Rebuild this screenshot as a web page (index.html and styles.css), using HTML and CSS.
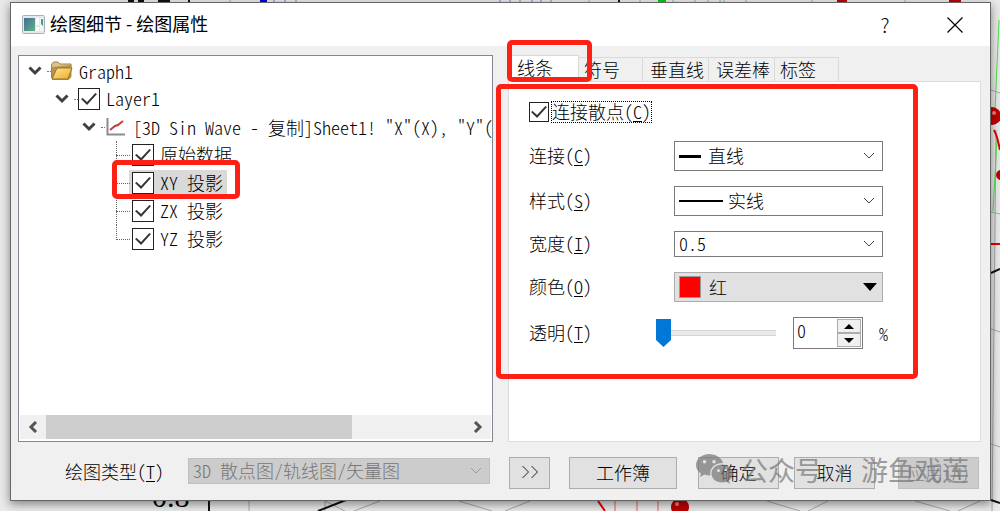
FILE: index.html
```html
<!DOCTYPE html>
<html lang="zh-CN">
<head>
<meta charset="utf-8">
<meta name="viewport" content="width=device-width, initial-scale=1">
<title>绘图细节 - 绘图属性</title>
<link rel="stylesheet" href="styles.css">
</head>
<body>
<svg class="graph" viewBox="0 0 1000 511" preserveAspectRatio="none" aria-hidden="true">
  <g stroke="#a8a8a8" fill="none">
    <path d="M249 500V511M325 500V511M325 501L345 511M354 511L380 501M459 501L492 511M505 511L530 501M767 501L800 511M808 511L828 501M915 501L950 511M958 511L980 501M991 90L1000 93M996 130L992 511M991 212L1000 214M991 329L1000 332M991 444L1000 447"/>
    <path d="M230 0V3M589 0V3M640 0V3M724 0V3M812 0V3M905 0V3"/>
  </g>
  <path d="M209 500V511M318 511L346 500M991 273L1000 269M991 500L1000 503M619 0V3" stroke="#111" stroke-width="2"/>
  <path d="M128 1H134M138 1H144M158 1H170M188 1H190" stroke="#111" stroke-width="3"/>
  <path d="M260 1H267" stroke="#0000e0" stroke-width="3"/>
  <path d="M274 0V3M285 0V3M296 0V3M500 0V3M510 0V3M520 0V3M532 0V3M541 0V3M551 0V3" stroke="#7777e8"/>
  <path d="M658 1H666" stroke="#00d000" stroke-width="3"/>
  <path d="M673 0V3M695 0V3M708 0V3M720 0V3M746 0V3M999 20L995 110M997 140L993 211" stroke="#4ce04c"/>
  <path d="M837 1H847M949 1H961" stroke="#c00000" stroke-width="3"/>
  <path d="M994 130Q997 135 1000 150M598 501L605 511M991 244H1000" stroke="#e00000" stroke-width="2" fill="none"/>
  <path d="M615 501V511M637 501V511M658 501V511" stroke="#e06060"/>
  <g fill="#c00000"><circle cx="992" cy="116" r="9"/><circle cx="1001" cy="175" r="5"/><circle cx="680" cy="507" r="9"/></g>
  <g fill="#f08080"><circle cx="994" cy="113" r="2"/><circle cx="677" cy="504" r="2"/></g>
  <text class="axis" x="152" y="507">0.8</text>
</svg>

<main class="dialog">
  <header class="titlebar">
    <svg class="app-icon" viewBox="0 0 23 19" aria-hidden="true">
      <defs><linearGradient id="app" x1="0" y1="0" x2="1" y2="1"><stop offset="0" stop-color="#3f6f92"/><stop offset="1" stop-color="#62b08a"/></linearGradient></defs>
      <rect x=".5" y=".5" width="22" height="18" rx="1" fill="#e4e9ee" stroke="#a9b0b8"/>
      <rect x="2" y="3" width="11" height="13" fill="url(#app)"/>
      <path d="M14 3h3v7h-3zM14 12h3v4h-3z" fill="#fafafa"/>
      <path d="M18 3h3v13h-3z" fill="#f5f5f5"/><path d="M19 4h2v7l-2-2z" fill="#4e9a86"/>
    </svg>
    <h1 class="title">绘图细节 - 绘图属性</h1>
    <button class="caption" type="button" aria-label="帮助">?</button>
    <button class="caption" type="button" aria-label="关闭">
      <svg width="16" height="16" viewBox="0 0 16 16" aria-hidden="true"><path d="M.5 .5l15 15M15.500 .5l-15 15" stroke="#000" stroke-width="1.200"/></svg>
    </button>
  </header>

  <div class="content">
    <section class="tree-pane">
      <ul class="tree">
        <li class="node level1">
          <svg class="chevron" viewBox="0 0 14 10"><path d="M1.500 1.500L7 7l5.500-5.500" /></svg>
          <svg class="node-icon" viewBox="0 0 22 20" aria-hidden="true">
            <defs><linearGradient id="fold" x1="0" y1="0" x2="1" y2="1"><stop offset="0" stop-color="#ffe9a0"/><stop offset="1" stop-color="#f0a818"/></linearGradient></defs>
            <path d="M.5 17V3L3 1h4l2 2h11v4" fill="#d8c38a" stroke="#9b8654"/>
            <path d="M20.500 4v12l-3 3H1V6z" fill="#b99545"/>
            <path d="M6 7h15l-4 11H1z" fill="url(#fold)" stroke="#8d7434"/>
          </svg>
          <span class="mono">Graph1</span>
        </li>
        <li class="node level2">
          <svg class="chevron" viewBox="0 0 14 10"><path d="M1.500 1.500L7 7l5.500-5.500"/></svg>
          <label class="check"><input class="box" type="checkbox" checked><span class="mono">Layer1</span></label>
        </li>
        <li class="node level3">
          <svg class="chevron" viewBox="0 0 14 10"><path d="M1.500 1.500L7 7l5.500-5.500"/></svg>
          <svg class="node-icon" viewBox="0 0 22 20" aria-hidden="true"><path d="M2.500 1v16.500H20" fill="none" stroke="#8c8c8c" stroke-width="2"/><path d="M5 13l5-4 3-1 5-4" fill="none" stroke="#c83c3c" stroke-width="2"/></svg>
          <span class="mono">[3D Sin Wave - 复制]Sheet1! "X"(X), "Y"(</span>
        </li>
        <li class="node leaf"><label class="check"><input class="box" type="checkbox" checked><span class="mono">原始数据</span></label></li>
        <li class="node leaf"><label class="check selected"><input class="box" type="checkbox" checked><span class="mono">XY 投影</span></label><span class="mark mark-node"></span></li>
        <li class="node leaf"><label class="check"><input class="box" type="checkbox" checked><span class="mono">ZX 投影</span></label></li>
        <li class="node leaf last"><label class="check"><input class="box" type="checkbox" checked><span class="mono">YZ 投影</span></label></li>
      </ul>
      <div class="scrollbar">
        <button class="scroll-button" type="button" aria-label="向左"><svg viewBox="0 0 10 12"><path d="M8 1L3 6l5 5"/></svg></button>
        <div class="track"><div class="thumb"></div></div>
        <button class="scroll-button" type="button" aria-label="向右"><svg viewBox="0 0 10 12"><path d="M2 1l5 5-5 5"/></svg></button>
      </div>
    </section>

    <section class="settings">
      <div class="tabs" role="tablist">
        <button class="tab active" type="button" role="tab" aria-selected="true">线条<span class="mark mark-tab"></span></button>
        <button class="tab" type="button" role="tab">符号</button>
        <button class="tab tight" type="button" role="tab">垂直线</button>
        <button class="tab tight" type="button" role="tab">误差棒</button>
        <button class="tab" type="button" role="tab">标签</button>
      </div>
      <form class="panel">
        <div class="connect">
          <input class="box small" type="checkbox" id="connect" checked>
          <label class="mono focus" for="connect">连接散点(<u>C</u>)</label>
        </div>
        <div class="field">
          <label class="mono name" for="join">连接(<u>C</u>)</label>
          <div class="combo">
            <span class="line short"></span>
            <select class="select after-short" id="join"><option>直线</option></select>
            <svg class="drop" viewBox="0 0 12 8"><path d="M1 1l5 5 5-5"/></svg>
          </div>
        </div>
        <div class="field">
          <label class="mono name" for="style">样式(<u>S</u>)</label>
          <div class="combo">
            <span class="line long"></span>
            <select class="select after-long" id="style"><option>实线</option></select>
            <svg class="drop" viewBox="0 0 12 8"><path d="M1 1l5 5 5-5"/></svg>
          </div>
        </div>
        <div class="field">
          <label class="mono name" for="width">宽度(<u>I</u>)</label>
          <div class="combo">
            <select class="select number" id="width"><option>0.5</option></select>
            <svg class="drop" viewBox="0 0 12 8"><path d="M1 1l5 5 5-5"/></svg>
          </div>
        </div>
        <div class="field">
          <label class="mono name" for="color">颜色(<u>O</u>)</label>
          <div class="combo">
            <span class="swatch"></span>
            <select class="select color" id="color"><option>红</option></select>
            <svg class="drop solid" viewBox="0 0 14 8"><path d="M0 0h14L7 8z"/></svg>
          </div>
        </div>
        <div class="field">
          <label class="mono name alpha" for="alpha">透明(<u>T</u>)</label>
          <input class="slider" type="range" id="alpha" min="0" max="100" value="0">
          <div class="spin">
            <input class="spin-value" type="text" value="0" aria-label="透明百分比">
            <div class="spin-buttons">
              <button class="step" type="button" aria-label="增加"><svg viewBox="0 0 10 5"><path d="M0 5h10L5 0z"/></svg></button>
              <button class="step" type="button" aria-label="减少"><svg viewBox="0 0 10 5"><path d="M0 0h10L5 5z"/></svg></button>
            </div>
          </div>
          <span class="mono percent">%</span>
        </div>
        <span class="mark mark-form"></span>
      </form>
    </section>
  </div>

  <footer class="footer">
    <div class="plot-type">
      <label class="mono" for="type">绘图类型(<u>T</u>)</label>
      <div class="combo wide">
        <select class="select disabled" id="type" disabled><option>3D 散点图/轨线图/矢量图</option></select>
        <svg class="drop" viewBox="0 0 12 8"><path d="M1 1l5 5 5-5"/></svg>
      </div>
    </div>
    <div class="actions">
      <button class="button more" type="button" aria-label="展开"><svg width="18" height="14" viewBox="0 0 18 14"><path d="M1.500 1l6 6-6 6M10.500 1l6 6-6 6" fill="none" stroke="#222"/></svg></button>
      <button class="button book" type="button">工作簿</button>
      <button class="button ok" type="button">确定</button>
      <button class="button cancel" type="button">取消</button>
      <button class="button apply" type="button" disabled><span class="mono">应用(A)</span></button>
    </div>
    <div class="watermark">
      <svg width="37" height="32" viewBox="0 0 37 32" aria-hidden="true">
        <path fill-rule="evenodd" d="M13 0C6 0 0 5 0 11c0 4 2 6.500 5 8.500L4 23l4.500-2.500q3 1 6 1C13 15 18 9 27 9 26 4 20 0 13 0zM8.500 6a1.800 1.800 0 1 1 0 3.600 1.800 1.800 0 0 1 0-3.600zM18 6a1.800 1.800 0 1 1 0 3.600A1.800 1.800 0 0 1 18 6z"/>
        <path fill-rule="evenodd" d="M26 10.500c-6 0-10.500 4-10.500 9s4.500 9 10.500 9q2.500 0 4.500-.8L34 30l-1-3.500c2.500-1.800 3.800-4 3.800-7 0-5-5-9-10.800-9zM22.500 15a1.500 1.500 0 1 1 0 3 1.500 1.500 0 0 1 0-3zM30 15a1.500 1.500 0 1 1 0 3 1.500 1.500 0 0 1 0-3z"/>
      </svg>
      <span>公众号 · 游鱼戏莲</span>
    </div>
  </footer>
</main>
</body>
</html>
```

FILE: styles.css
```css
* { box-sizing: border-box; }

body {
  margin: 0;
  min-height: 100vh;
  display: flex;
  padding: 2px 9px 10px 10px;
  position: relative;
  overflow: hidden;
  background: #e9e9e9;
  color: #000;
  font: 300 18px/20px "Noto Sans CJK SC", sans-serif;
}

button, select, input { font: inherit; color: inherit; margin: 0; }

.graph { position: absolute; inset: 0; width: 100%; height: 100%; }
.axis { font: 30px "Liberation Serif", serif; }

/* Half-width Latin glyphs beside full-width Chinese ones */
.mono, .number, .spin-value, .disabled {
  font: 300 18px/20px "Noto Sans CJK SC", sans-serif;
  font-feature-settings: "hwid";
  white-space: pre;
}
u { text-underline-offset: 2px; }

.dialog {
  flex: 1;
  min-width: 0;
  display: flex;
  flex-direction: column;
  position: relative;
  background: #f0f0f0;
  border: 1px solid #666;
  box-shadow: 0 3px 9px rgba(0, 0, 0, .45);
}

.titlebar { display: flex; align-items: center; height: 43px; padding-left: 11px; background: #fff; }
.app-icon { width: 23px; height: 19px; }
.title { flex: 1; margin: 0 0 0 5px; padding-bottom: 3px; font: 400 18px/20px "Noto Sans CJK SC", sans-serif; }
.caption { display: flex; align-items: center; justify-content: center; width: 70px; height: 40px; border: 0; padding: 0; background: none; font-size: 20px; }

.content { flex: 1; display: grid; grid-template-columns: 475fr 473fr; gap: 15px; padding: 9px 9px 0 7px; }

.tree-pane { display: flex; flex-direction: column; justify-content: space-between; min-width: 0; border: 1px solid #828790; background: #fff; overflow: hidden; }
.tree { list-style: none; margin: 0; padding: 1px 0 0; }
.node { position: relative; display: flex; align-items: center; height: 28px; white-space: nowrap; }
.level1 { padding-left: 9px; }
.level2 { padding-left: 36px; }
.level3 { padding-left: 63px; }
.leaf { padding-left: 110px; }
.chevron { flex: none; width: 14px; height: 10px; margin-right: 9px; }
.chevron path { fill: none; stroke: #404040; stroke-width: 3; }
.node-icon { flex: none; width: 22px; height: 20px; margin-right: 6px; }
.level1::before, .level2::before, .level3::before { content: ""; position: absolute; width: 4px; border-top: 1px dotted #777; }
.level1::before { left: 28px; }
.level2::before { left: 55px; }
.level3::before { left: 82px; }
.leaf::before { content: ""; position: absolute; left: 97px; top: 0; bottom: 0; border-left: 1px dotted #666; }
.leaf.last::before { bottom: 13px; }
.leaf::after { content: ""; position: absolute; left: 97px; width: 14px; border-top: 1px dotted #666; }

.check { display: flex; align-items: center; gap: 6px; height: 26px; }
.leaf .check { padding: 0 4px 0 3px; }
.check .mono { padding-bottom: 2px; }
.selected { background: #d9d9d9; }
.box { appearance: none; flex: none; display: grid; place-items: center; width: 22px; height: 22px; border: 1px solid #222; background: #fff; }
.box:checked::before { content: ""; width: 16px; height: 12px; background: #333; clip-path: polygon(0 50%, 10% 42%, 38% 75%, 90% 0, 100% 8%, 38% 100%); }
.small { width: 20px; height: 20px; }

.scrollbar { display: flex; height: 26px; padding: 0 1px 2px; }
.scroll-button { flex: none; width: 26px; border: 0; padding: 0; background: #f0f0f0; }
.scroll-button svg { display: block; width: 10px; height: 12px; margin: 0 auto; }
.scroll-button path { fill: none; stroke: #555; stroke-width: 3; }
.track { flex: 1; background: #f0f0f0; }
.thumb { width: 73%; height: 24px; background: #cdcdcd; }

.settings { display: flex; flex-direction: column; min-width: 0; }
.tabs { display: flex; align-items: flex-end; height: 26px; }
.tab { position: relative; height: 24px; padding: 0 22px 2px 5px; border: 1px solid #d9d9d9; border-width: 1px 1px 0 0; background: #f0f0f0; line-height: 20px; white-space: nowrap; }
.tab.active { height: 27px; margin-bottom: -1px; padding: 0 25px 4px 8px; border-left-width: 1px; background: #fff; z-index: 1; }
.tab.tight { padding: 0 4px 2px 7px; }
.panel { flex: 1; position: relative; padding: 20px 20px 0; border: 1px solid #dcdcdc; background: #fff; }

.connect { display: flex; align-items: center; gap: 3px; margin-bottom: 19px; }
.focus { height: 20px; line-height: 18px; outline: 1px dotted #000; }
.field { display: flex; align-items: center; margin-bottom: 15px; }
.name { flex: none; width: 145px; padding-bottom: 2px; }
.name.alpha { width: 127px; }

.combo { position: relative; flex: 0 1 209px; display: flex; align-items: center; }
.select { appearance: none; width: 100%; height: 30px; padding: 0 30px 3px 4px; border: 1px solid #7a7a7a; border-radius: 0; background: #fff; opacity: 1; }
.after-short { padding-left: 33px; }
.after-long { padding-left: 53px; }
.number { height: 26px; }
.color { padding: 0 30px 0 34px; border-color: #adadad; background: #e1e1e1; }
.drop { position: absolute; right: 8px; width: 12px; height: 8px; pointer-events: none; }
.drop path { fill: none; stroke: #444; }
.drop.solid { right: 6px; width: 14px; }
.drop.solid path { fill: #000; stroke: none; }
.line { position: absolute; left: 5px; background: #000; }
.short { width: 22px; height: 3px; }
.long { width: 44px; height: 2px; }
.swatch { position: absolute; left: 5px; width: 22px; height: 22px; border: 1px solid #999; background: #f00; }

.slider { appearance: none; flex: 0 1 120px; min-width: 0; height: 28px; background: linear-gradient(#e7eaea, #e7eaea) center / 100% 4px no-repeat, linear-gradient(#d6d6d6, #d6d6d6) center / 100% 6px no-repeat; }
.slider::-webkit-slider-thumb { appearance: none; width: 15px; height: 28px; background: #0078d7; clip-path: polygon(0 0, 100% 0, 100% 75%, 50% 100%, 0 75%); }
.spin { display: flex; width: 70px; height: 32px; margin-left: 17px; border: 1px solid #7a7a7a; background: #fff; }
.spin-value { flex: 1; min-width: 0; padding: 0 3px 6px; border: 0; background: none; }
.spin-buttons { display: flex; flex-direction: column; width: 26px; padding: 1px; }
.step { flex: 1; display: grid; place-items: center; padding: 0; border: 1px solid #adadad; background: #f0f0f0; }
.step svg { width: 10px; height: 5px; }
.percent { margin-left: 16px; }

.footer { position: relative; display: grid; grid-template-columns: 475fr 473fr; gap: 15px; padding: 15px 9px 11px 7px; }
.plot-type { display: flex; align-items: center; justify-content: flex-end; gap: 24px; height: 28px; padding-right: 3px; }
.combo.wide { flex-basis: 302px; }
.select.disabled { height: 26px; border-color: #bfbfbf; background: #ccc; color: #777; }
.wide .drop path { stroke: #999; }
.actions { display: flex; }
.button { display: flex; align-items: center; justify-content: center; flex: 0 1 81px; height: 32px; padding: 0 0 2px; border: 1px solid #adadad; background: #e1e1e1; white-space: nowrap; }
.more { flex-basis: 41px; margin: 0 19px 0 1px; }
.book { flex-basis: 108px; margin-right: 21px; }
.ok { margin-right: 15px; }
.cancel { margin-right: 23px; }
.apply { border-color: #bfbfbf; background: #ccc; color: #888; }

.watermark { position: absolute; right: 21px; top: 12px; display: flex; align-items: center; gap: 8px; color: #777; fill: #777; opacity: .7; font: 27px/32px "Noto Sans CJK SC", sans-serif; white-space: nowrap; pointer-events: none; }

.mark { position: absolute; z-index: 2; border: 5px solid #ff2015; border-radius: 5px; pointer-events: none; }
.mark-node { left: 93px; top: -9px; width: 128px; height: 39px; }
.mark-tab { left: -2px; top: -16px; width: 85px; height: 42px; }
.mark-form { left: -13px; top: 2px; width: 422px; height: 295px; }
```
